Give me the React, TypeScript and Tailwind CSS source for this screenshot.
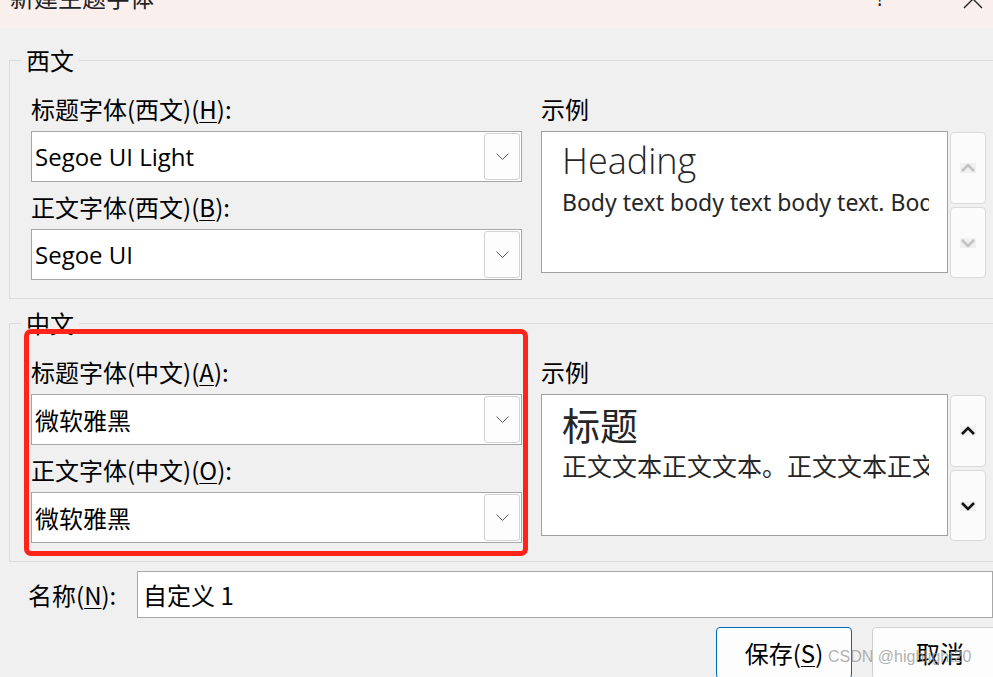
import React from 'react';

const cjk = "font-['Noto_Sans_CJK_SC',sans-serif]";
const latin = "font-['Open_Sans','Noto_Sans_CJK_SC',sans-serif]";

function ChevronSmall() {
  return (
    <svg width="13" height="7" viewBox="0 0 13 7">
      <polyline points="0.5,0.5 6.5,6.5 12.5,0.5" fill="none" stroke="#5a5a5a" strokeWidth="1" />
    </svg>
  );
}

function ScrollArrow({ up, enabled }: { up: boolean; enabled: boolean }) {
  const color = enabled ? '#111111' : '#c2c2c2';
  return (
    <svg width="16" height="10" viewBox="0 0 16 10">
      <rect x="0" y="0" width="16" height="10" fill="#f0f0f0" />
      <polyline
        points={up ? '2,8 8,2 14,8' : '2,2 8,8 14,2'}
        fill="none"
        stroke={color}
        strokeWidth="2.6"
      />
    </svg>
  );
}

function Label({ text, hotkey }: { text: string; hotkey: string }) {
  return (
    <div className={`${cjk} text-[24px] leading-[32px] text-black`}>
      {text}(<span className="underline underline-offset-[3px] decoration-1">{hotkey}</span>):
    </div>
  );
}

function Dropdown({ value, font }: { value: string; font: string }) {
  return (
    <div className="flex h-[51px] items-center border border-[#a6a6a6] bg-white pl-[3px] pr-[1px]">
      <div className={`${font} flex-1 text-[24px] text-black`}>{value}</div>
      <div className="flex h-[47px] w-[36px] items-center justify-center rounded-[3px] border border-[#d2d2d2] bg-[#fdfdfd]">
        <ChevronSmall />
      </div>
    </div>
  );
}

function Preview({ heading, body, headingClass, bodyClass, enabled }: {
  heading: string; body: string; headingClass: string; bodyClass: string; enabled: boolean;
}) {
  return (
    <div className="flex flex-col">
      <div className={`${cjk} text-[24px] leading-[32px] text-black`}>示例</div>
      <div className="mt-[6px] flex">
        <div className="h-[142px] w-[407px] border border-[#a0a0a0] bg-white pl-[20px] pt-[7px]">
          <div className="w-[367px] overflow-hidden whitespace-nowrap text-[#262626]">
            <div className={headingClass}>{heading}</div>
            <div className={`mt-[4px] ${bodyClass}`}>{body}</div>
          </div>
        </div>
        <div className="ml-[2px] mt-[1px] flex flex-col gap-[3px]">
          <div className="flex h-[72px] w-[36px] items-center justify-center rounded-[4px] border border-[#dadada] bg-[#fbfbfb]">
            <ScrollArrow up enabled={enabled} />
          </div>
          <div className="flex h-[71px] w-[36px] items-center justify-center rounded-[4px] border border-[#dadada] bg-[#fbfbfb]">
            <ScrollArrow up={false} enabled={enabled} />
          </div>
        </div>
      </div>
    </div>
  );
}

function Group({ title, children }: { title: string; children: React.ReactNode }) {
  return (
    <fieldset className="w-[1000px] border border-[#dcdcdc] pb-[18px]">
      <legend className={`${cjk} ml-[11px] px-[5px] text-[24px] leading-[24px] text-black`}>{title}</legend>
      <div className="mt-[21px] flex gap-[19px] pl-[21px]">{children}</div>
    </fieldset>
  );
}

export default function App() {
  return (
    <div className="relative h-[677px] w-[993px] overflow-hidden bg-[#f0f0f0]">
      {/* title bar, scrolled off the top */}
      <div className="h-[28px] overflow-hidden bg-[#f9efed]">
        <div className="flex items-start pl-[10px] pr-[10px]">
          <span className={`${cjk} -mt-[15px] text-[24px] leading-[24px] text-[#222]`}>新建主题字体</span>
          <span className={`${latin} ml-auto -mt-[14px] text-[21px] leading-[24px] text-[#222]`}>?</span>
          <svg className="ml-[78px] -mt-[11px]" width="20" height="20" viewBox="0 0 20 20">
            <path d="M1 1 L19 19 M19 1 L1 19" stroke="#222" strokeWidth="1.4" fill="none" />
          </svg>
        </div>
      </div>

      <div className="pl-[9px] pt-[20px]">
        <Group title="西文">
          <div className="w-[491px]">
            <Label text="标题字体(西文)" hotkey="H" />
            <div className="mt-[6px]">
              <Dropdown value="Segoe UI Light" font={latin} />
            </div>
            <div className="mt-[9px]">
              <Label text="正文字体(西文)" hotkey="B" />
            </div>
            <div className="mt-[6px]">
              <Dropdown value="Segoe UI" font={latin} />
            </div>
          </div>
          <Preview
            heading="Heading"
            body="Body text body text body text. Body text body text."
            headingClass={`${latin} font-light text-[36px] leading-[44px]`}
            bodyClass={`font-['Noto_Sans',sans-serif] text-[23px] leading-[30px]`}
            enabled={false}
          />
        </Group>

        <div className="mt-[12px]">
          <Group title="中文">
            <div className="w-[491px]">
              <Label text="标题字体(中文)" hotkey="A" />
              <div className="mt-[6px]">
                <Dropdown value="微软雅黑" font={cjk} />
              </div>
              <div className="mt-[9px]">
                <Label text="正文字体(中文)" hotkey="O" />
              </div>
              <div className="mt-[6px]">
                <Dropdown value="微软雅黑" font={cjk} />
              </div>
            </div>
            <Preview
              heading="标题"
              body="正文文本正文文本。正文文本正文文本。"
              headingClass={`${cjk} text-[38px] leading-[44px]`}
              bodyClass={`${cjk} text-[25px] leading-[30px]`}
              enabled
            />
          </Group>
        </div>

        {/* name */}
        <div className="mt-[9px] flex items-center">
          <div className={`${cjk} w-[128px] shrink-0 pl-[19px] text-[24px] text-black`}>
            名称(<span className="underline underline-offset-[3px] decoration-1">N</span>):
          </div>
          <div className={`${cjk} flex h-[47px] flex-1 items-center border border-[#a8a8a8] bg-white pl-[5px] text-[24px] text-black`}>
            自定义 1
          </div>
        </div>

        {/* buttons */}
        <div className="mt-[9px] flex pl-[707px]">
          <div className={`${cjk} flex h-[52px] w-[136px] shrink-0 items-center justify-center rounded-[4px] border border-[#0067c0] bg-[#fdfdfd] text-[24px] text-black`}>
            保存(<span className="underline underline-offset-[3px] decoration-1">S</span>)
          </div>
          <div className={`${cjk} ml-[20px] flex h-[52px] w-[136px] shrink-0 items-center justify-center rounded-[4px] border border-[#d0d0d0] bg-[#fdfdfd] text-[24px] text-black`}>
            取消
          </div>
        </div>
      </div>

      {/* red highlight */}
      <div className="absolute left-[24px] top-[329px] h-[227px] w-[504px] rounded-[7px] border-[5px] border-[#fe2419]" />

      {/* watermark */}
      <div className="absolute left-[828px] top-[645px] font-['Liberation_Sans',sans-serif] text-[16px] text-[#9c9c9c]/80">
        CSDN @highlight20
      </div>
    </div>
  );
}
